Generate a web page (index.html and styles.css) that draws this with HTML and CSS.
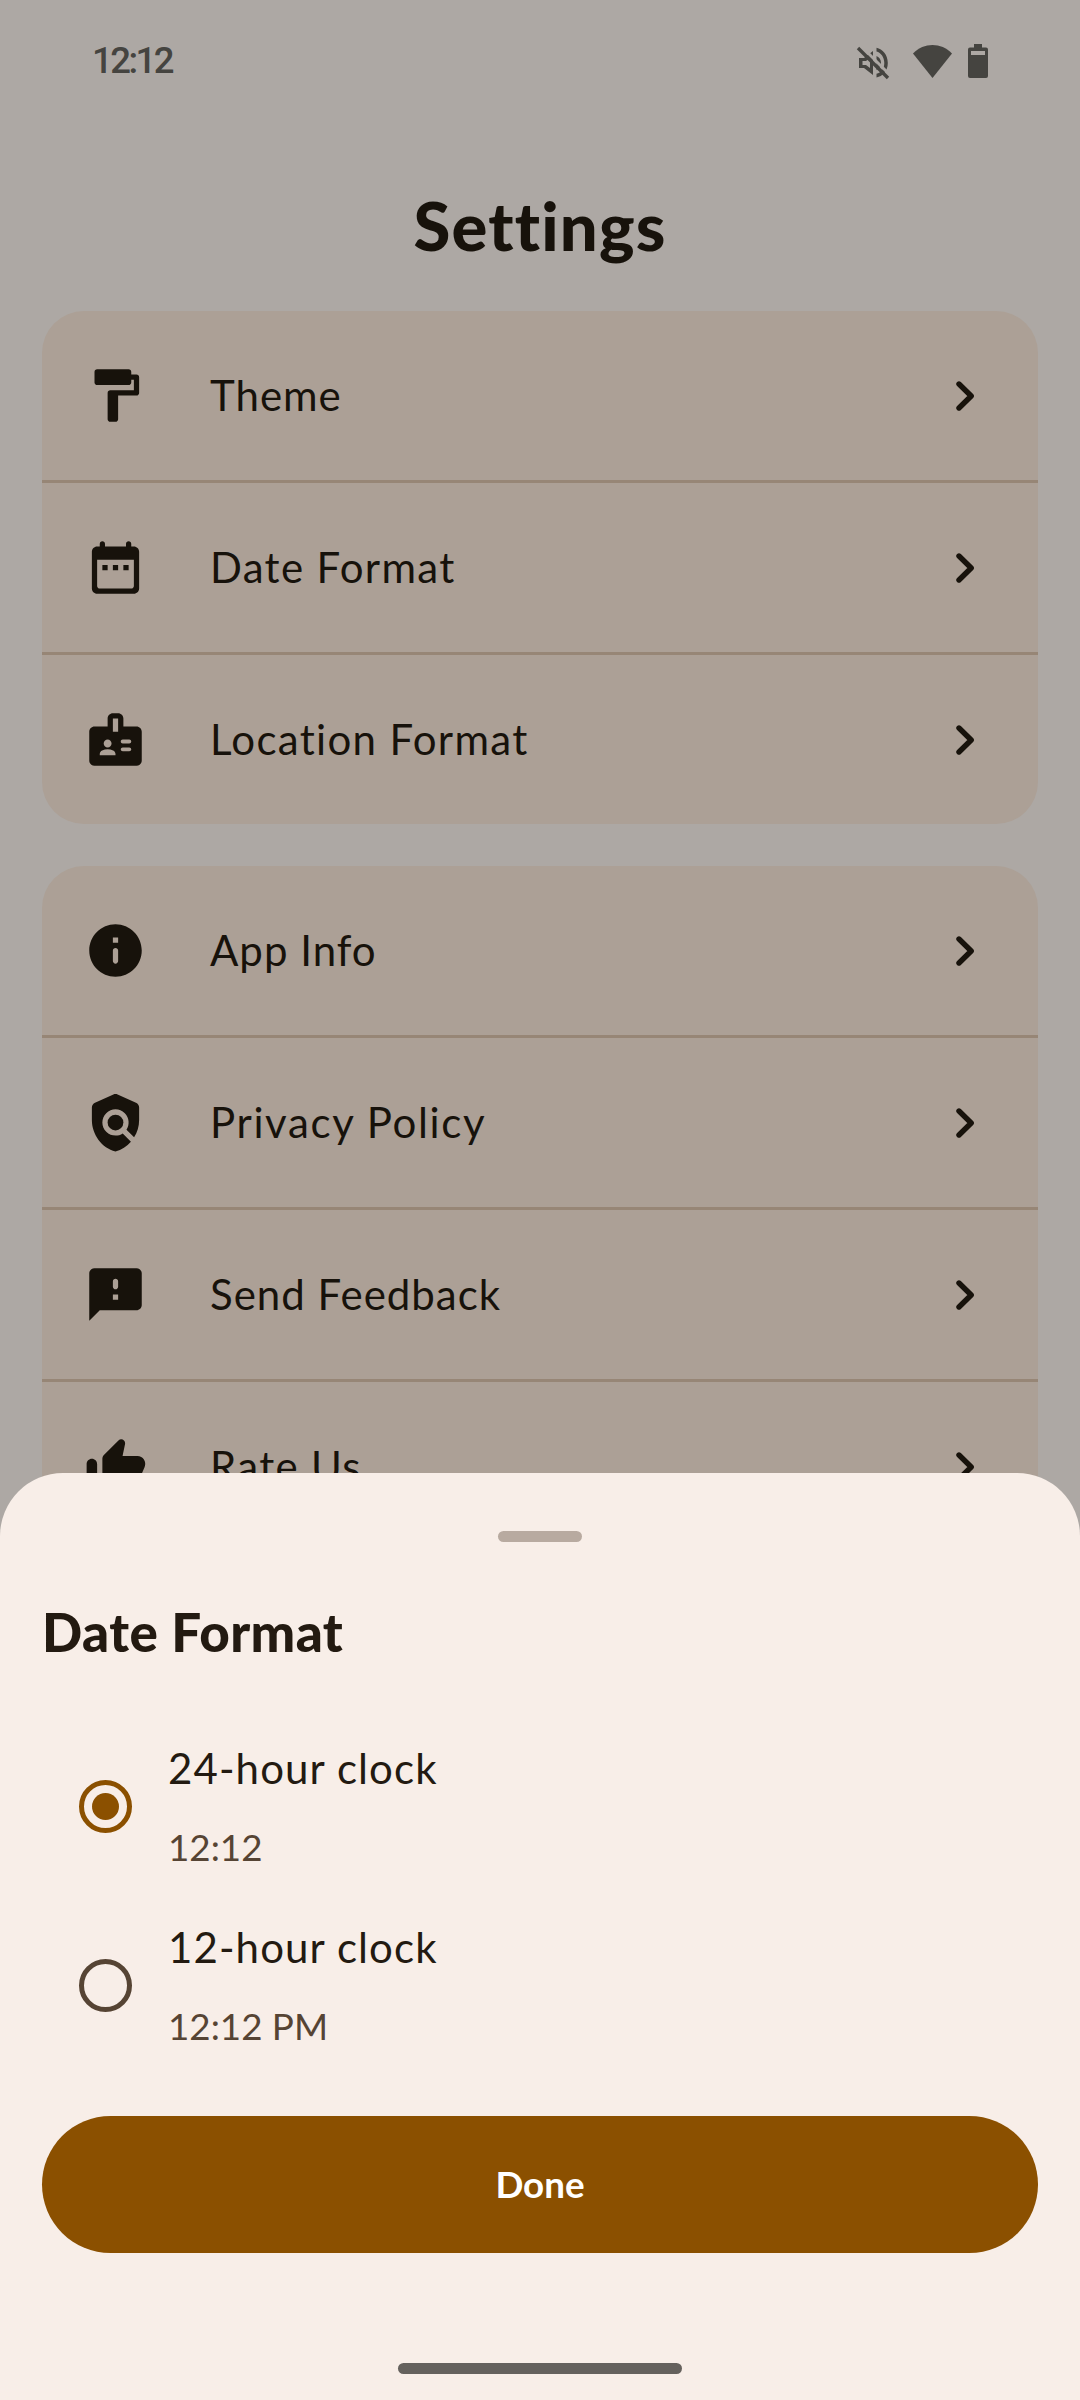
FILE: index.html
```html
<!DOCTYPE html>
<html lang="en">
<head>
<meta charset="utf-8">
<title>Settings</title>
<link rel="stylesheet" href="styles.css">
</head>
<body>
<div class="screen">
  <header class="status">
    <span class="clock">12:12</span>
    <div class="status-icons">
      <svg class="mute" viewBox="0 0 32 32"><path fill-rule="evenodd" d="M2 11h5l9-7v24l-9-7H2zM5.500 14v4H9l4 3V11l-4 3zM19.500.800c6 1.200 11.300 6.900 11.300 15.200s-5.300 13.300-11.300 14.500v-3.700c4.500-1.200 7.800-5 7.800-10.800s-3.300-10.300-7.800-11.500zM19.500 9c3 1.300 4.500 4 4.500 7s-1.500 5.700-4.500 7z"/><path class="gap" d="M3.500-1.500L33.500 28.500"/><path class="slash" d="M1 1L31 31"/></svg>
      <svg class="wifi" viewBox="0 0 39 33"><path d="M0 8.500C11 -2.800 28 -2.800 39 8.500L19.500 33z"/></svg>
      <svg class="battery" viewBox="0 0 20 34"><path fill-rule="evenodd" d="M6 0h8v3.500h4a2 2 0 0 1 2 2V32a2 2 0 0 1-2 2H2a2 2 0 0 1-2-2V5.500a2 2 0 0 1 2-2h4zM3 7v4h14V7z"/></svg>
    </div>
  </header>
  <h1 class="title">Settings</h1>
  <main class="cards">
    <section class="card">
      <div class="row"><svg class="icon" viewBox="0 0 24 24"><path d="M18 4V3c0-.55-.45-1-1-1H5c-.55 0-1 .45-1 1v4c0 .55.45 1 1 1h12c.55 0 1-.45 1-1V6h1v4h-9c-.55 0-1 .45-1 1v10c0 .55.45 1 1 1h2c.55 0 1-.45 1-1v-9h7c.55 0 1-.45 1-1V5c0-.55-.45-1-1-1h-2z"/></svg><span class="label tight">Theme</span><svg class="chevron" viewBox="0 0 20 32"><path d="M4 4l12.200 12L4 28"/></svg></div>
      <div class="row"><svg class="icon" viewBox="0 0 24 24"><path fill-rule="evenodd" d="M19 4h-1V3c0-.55-.45-1-1-1s-1 .45-1 1v1H8V3c0-.55-.45-1-1-1s-1 .45-1 1v1H5c-1.110 0-2 .9-2 2v14c0 1.100.89 2 2 2h14c1.100 0 2-.9 2-2V6c0-1.100-.9-2-2-2zm0 15c0 .55-.45 1-1 1H6c-.55 0-1-.45-1-1V9h14v10zM7 11h2v2H7zm4 0h2v2h-2zm4 0h2v2h-2z"/></svg><span class="label">Date Format</span><svg class="chevron" viewBox="0 0 20 32"><path d="M4 4l12.200 12L4 28"/></svg></div>
      <div class="row"><svg class="icon" viewBox="0 0 24 24"><path fill-rule="evenodd" d="M20 7h-5V4c0-1.100-.9-2-2-2h-2c-1.100 0-2 .9-2 2v3H4c-1.100 0-2 .9-2 2v11c0 1.100.9 2 2 2h16c1.100 0 2-.9 2-2V9c0-1.100-.9-2-2-2zM9 12c.83 0 1.500.67 1.500 1.500S9.830 15 9 15s-1.500-.67-1.500-1.500S8.170 12 9 12zm3 6H6v-.43c0-.6.36-1.150.92-1.390.64-.28 1.340-.43 2.080-.43s1.440.15 2.080.43c.55.24.92.78.92 1.390V18zm1-9h-2V4h2v5zm4.250 7.500h-2.500c-.41 0-.75-.34-.75-.75s.34-.75.75-.75h2.500c.41 0 .75.34.75.75s-.34.75-.75.75zm0-3h-2.500c-.41 0-.75-.34-.75-.75s.34-.75.75-.75h2.500c.41 0 .75.34.75.75s-.34.75-.75.75z"/></svg><span class="label">Location Format</span><svg class="chevron" viewBox="0 0 20 32"><path d="M4 4l12.200 12L4 28"/></svg></div>
    </section>
    <section class="card">
      <div class="row"><svg class="icon" viewBox="0 0 24 24"><path fill-rule="evenodd" d="M12 2C6.480 2 2 6.480 2 12s4.480 10 10 10 10-4.480 10-10S17.520 2 12 2zm0 15c-.55 0-1-.45-1-1v-4c0-.55.45-1 1-1s1 .45 1 1v4c0 .55-.45 1-1 1zm1-8h-2V7h2v2z"/></svg><span class="label tight">App Info</span><svg class="chevron" viewBox="0 0 20 32"><path d="M4 4l12.200 12L4 28"/></svg></div>
      <div class="row"><svg class="icon" viewBox="0 0 24 24"><path d="M21 11V6.300c0-.8-.47-1.520-1.190-1.830L12.800 1.350c-.5-.22-1.100-.22-1.600 0L4.190 4.470C3.470 4.790 3 5.500 3 6.300V11c0 5.550 3.840 10.740 9 12 2.300-.56 4.330-1.900 5.880-3.710l-3.120-3.120c-1.940 1.290-4.580 1.070-6.290-.64-1.950-1.950-1.950-5.120 0-7.070s5.120-1.950 7.070 0c1.710 1.710 1.920 4.350.64 6.290l2.900 2.900C20.290 15.690 21 13.380 21 11z"/><circle cx="12" cy="12" r="3"/></svg><span class="label loose">Privacy Policy</span><svg class="chevron" viewBox="0 0 20 32"><path d="M4 4l12.200 12L4 28"/></svg></div>
      <div class="row"><svg class="icon" viewBox="0 0 24 24"><path fill-rule="evenodd" d="M20 2H4c-1.100 0-2 .9-2 2v18l4-4h14c1.100 0 2-.9 2-2V4c0-1.100-.9-2-2-2zm-8 8c-.55 0-1-.45-1-1V7c0-.55.45-1 1-1s1 .45 1 1v2c0 .55-.45 1-1 1zm1 4h-2v-2h2v2z"/></svg><span class="label tight">Send Feedback</span><svg class="chevron" viewBox="0 0 20 32"><path d="M4 4l12.200 12L4 28"/></svg></div>
      <div class="row"><svg class="icon" viewBox="0 0 24 24"><path d="M13.120 2.060L7.580 7.600c-.37.37-.58.88-.58 1.410V19c0 1.100.9 2 2 2h9c.8 0 1.520-.48 1.840-1.210l3.260-7.610C23.940 10.200 22.490 8 20.340 8h-5.650l.95-4.580c.1-.5-.05-1.010-.41-1.370-.59-.58-1.530-.58-2.110.01zM3 21c1.100 0 2-.9 2-2v-8c0-1.100-.9-2-2-2s-2 .9-2 2v8c0 1.100.9 2 2 2z"/></svg><span class="label">Rate Us</span><svg class="chevron" viewBox="0 0 20 32"><path d="M4 4l12.200 12L4 28"/></svg></div>
    </section>
  </main>
  <section class="sheet">
    <div class="handle"></div>
    <h2 class="sheet-title">Date Format</h2>
    <div class="options">
      <div class="option"><span class="radio selected"></span><div class="option-text"><span class="option-name">24-hour clock</span><span class="option-sample">12:12</span></div></div>
      <div class="option"><span class="radio"></span><div class="option-text"><span class="option-name">12-hour clock</span><span class="option-sample">12:12 PM</span></div></div>
    </div>
    <button class="done">Done</button>
    <div class="home-bar"></div>
  </section>
</div>
</body>
</html>
```

FILE: styles.css
```css
* { box-sizing: border-box; }
body { margin: 0; font-family: Lato, sans-serif; }
.screen { position: relative; width: 1080px; height: 2400px; overflow: hidden; background: #ada8a4; color: #17120b; }
svg { display: block; flex: none; fill: currentColor; }

.status { height: 122px; padding: 0 92px; display: flex; align-items: center; justify-content: space-between; color: #454440; }
.clock { font: 500 36.500px/40px "Roboto", sans-serif; letter-spacing: -2.500px; }
.status-icons { display: flex; align-items: center; }
.mute { width: 32px; height: 32px; margin-right: 24px; margin-top: 4px; overflow: visible; }
.mute .gap { stroke: #ada8a4; stroke-width: 3; fill: none; }
.mute .slash { stroke: currentColor; stroke-width: 3.400; fill: none; }
.wifi { width: 39px; height: 33px; margin-right: 16px; }
.battery { width: 20px; height: 34px; }

.title { margin: 0; height: 189px; padding-top: 63px; text-align: center; font-size: 67px; line-height: 80px; font-weight: 900; font-variant-ligatures: none; letter-spacing: 1.200px; }

.cards { display: flex; flex-direction: column; gap: 42px; padding: 0 42px; }
.card { border-radius: 42px; overflow: hidden; background: #aca096; }
.row { height: 169px; padding: 0 63px 0 42px; display: flex; align-items: center; }
.row + .row { height: 172px; border-top: 3px solid #978676; }
.icon { width: 63px; height: 63px; margin-right: 63px; }
.label { flex: 1; font-size: 42px; line-height: 63px; letter-spacing: 1.310px; }
.label.tight { letter-spacing: 1px; }
.label.loose { letter-spacing: 1.640px; }
.chevron { width: 20px; height: 32px; fill: none; stroke: currentColor; stroke-width: 5.400; stroke-linecap: round; stroke-linejoin: round; }

.sheet { position: absolute; left: 0; right: 0; top: 1473px; height: 927px; padding: 58px 42px 26px; border-radius: 63px 63px 0 0; background: #f8eee8; color: #231a11; display: flex; flex-direction: column; }
.handle { align-self: center; width: 84px; height: 11px; border-radius: 6px; background: #b8aaa0; }
.sheet-title { margin: 57px 0 0; font-size: 53px; line-height: 66px; font-weight: 900; letter-spacing: .400px; }
.options { margin-top: 52px; }
.option { height: 179px; padding-left: 37px; display: flex; align-items: center; gap: 36px; }
.radio { width: 53px; height: 53px; border: 5px solid #564434; border-radius: 50%; display: grid; place-items: center; }
.radio.selected { border-color: #8b5000; }
.radio.selected::after { content: ""; width: 27px; height: 27px; border-radius: 50%; background: #8b5000; }
.option-text { display: flex; flex-direction: column; gap: 21px; padding-bottom: 4px; }
.option-name { font-size: 42px; line-height: 63px; letter-spacing: 1.100px; }
.option-sample { font-size: 36.750px; line-height: 52px; color: #564434; }
.done { margin: 41px 0 0; height: 137px; border: 0; border-radius: 69px; background: #8b5000; color: #fff; font: 700 36.750px/53px Lato, sans-serif; }
.home-bar { margin: auto auto 0; width: 284px; height: 11px; border-radius: 6px; background: #65615d; }
```
